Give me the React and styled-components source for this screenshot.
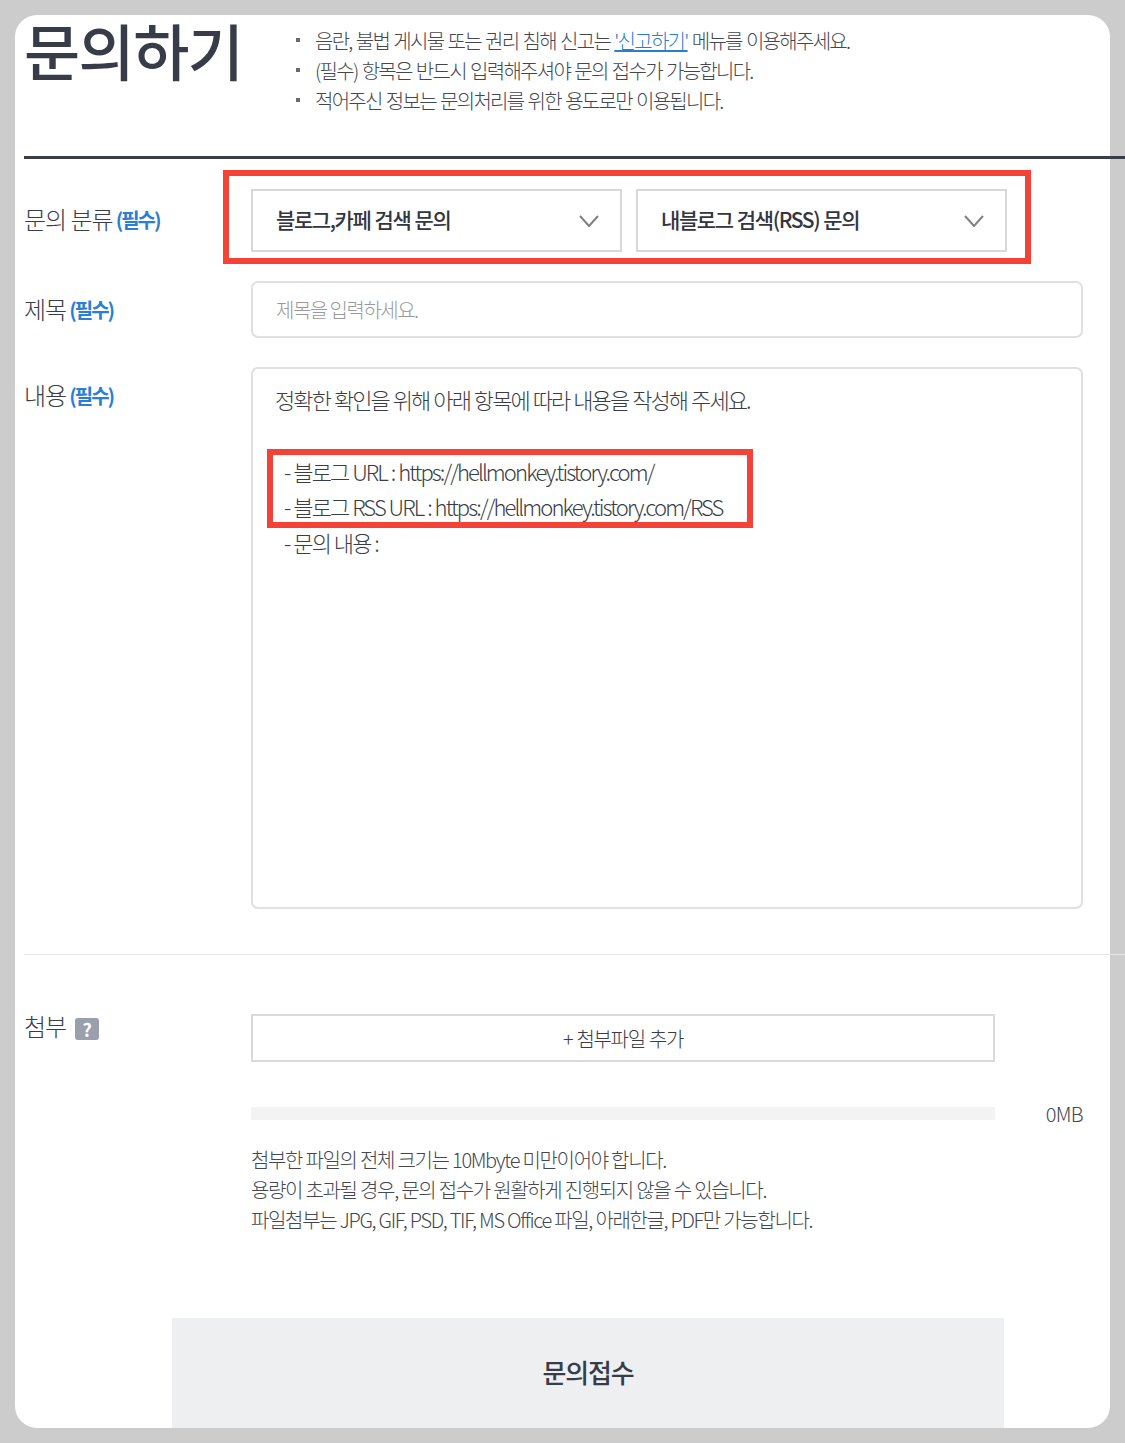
import React from "react";
import styled, { createGlobalStyle } from "styled-components";

const GlobalStyle = createGlobalStyle`
    * {
        box-sizing: border-box;
    }
    html, body {
        margin: 0;
        background-color: #cccccc;
    }
    body {
        height: 1443px;
        overflow: hidden;
        font-family: "Noto Sans CJK KR", "Noto Sans", sans-serif;
        color: #3a3d46;
    }
`

const Card = styled.div`
    width: 1095px;
    height: 1413px;
    margin: 15px 0 0 15px;
    padding-left: 9px;
    background-color: #ffffff;
    border-radius: 22px;
`

const Header = styled.header`
    height: 141px;
    display: flex;
    align-items: flex-start;
`

const Title = styled.h1`
    width: 272px;
    margin: 0;
    font-size: 61px;
    line-height: 70px;
    font-weight: 500;
    letter-spacing: -1.5px;
    color: #383c48;
`

const Notices = styled.ul`
    list-style: none;
    margin: 11px 0 0;
    padding: 0;
`

const Notice = styled.li`
    position: relative;
    padding-left: 19px;
    font-size: 20px;
    line-height: 30px;
    font-weight: 300;
    letter-spacing: -1.73px;
    word-spacing: 1.5px;
    color: #44474f;
    &::before {
        content: "";
        position: absolute;
        left: 0;
        top: 12px;
        width: 4px;
        height: 4px;
        background-color: #666a72;
    }
`

const NoticeLink = styled.a`
    color: #2a7fc9;
    text-decoration: underline;
`

const HeavyLine = styled.div`
    height: 3px;
    margin-right: -15px;
    background-color: #3a3d46;
`

const FormRow = styled.div`
    display: grid;
    grid-template-columns: 227px 1fr;
    margin-top: ${(props) => props.$top}px;
`

const Label = styled.label`
    margin-top: ${(props) => props.$top || 0}px;
    font-size: 24px;
    line-height: 32px;
    font-weight: 300;
    letter-spacing: -1px;
    color: #3a3d46;
    display: flex;
    align-items: center;
    align-self: flex-start;
    gap: 3px;
`

const Required = styled.span`
    margin-top: 2px;
    font-size: 20px;
    font-weight: 700;
    letter-spacing: -2px;
    color: #2a7fd4;
`

const RedFrame = styled.div`
    width: 808px;
    height: 94px;
    margin-left: -28px;
    padding: 13px 0 0 22px;
    display: flex;
    gap: 14px;
    border: 6px solid #f44336;
`

const Select = styled.div`
    width: 371px;
    height: 63px;
    padding: 0 21px 4px 23px;
    display: flex;
    align-items: center;
    justify-content: space-between;
    border: 2px solid #d8d8d8;
    font-size: 21px;
    font-weight: 500;
    letter-spacing: -1.4px;
    word-spacing: 0.8px;
    color: #33363f;
`

const Chevron = styled.svg`
    width: 20px;
    height: 12px;
    margin-top: 4px;
    fill: none;
    stroke: #7d8087;
    stroke-width: 2;
`

const TextInput = styled.div`
    width: 832px;
    height: 57px;
    padding: 0 23px;
    display: flex;
    align-items: center;
    border: 2px solid #e0e0e0;
    border-radius: 7px;
    font-size: 20px;
    font-weight: 300;
    letter-spacing: -1.5px;
    color: #9a9a9a;
`

const TextArea = styled.div`
    width: 832px;
    height: 542px;
    padding: 13px 0 0 14px;
    border: 2px solid #e0e0e0;
    border-radius: 7px;
    font-size: 22px;
    line-height: 35px;
    font-weight: 300;
    letter-spacing: -1.9px;
    word-spacing: 0.9px;
    color: #3a3d46;
`

const TextLine = styled.div`
    padding-left: ${(props) => props.$indent}px;
    margin-top: ${(props) => props.$top || 0}px;
`

const Highlight = styled.div`
    width: 486px;
    height: 79px;
    margin-top: 32px;
    padding-left: 11px;
    border: 6px solid #f44336;
    & > div:first-child {
        margin-top: -1px;
    }
`

const ThinLine = styled.div`
    height: 1px;
    margin: 45px -15px 0 0;
    background-color: #e6e6e6;
`

const HelpBadge = styled.span`
    width: 24px;
    height: 22px;
    margin: 6px 0 0 6px;
    display: flex;
    align-items: center;
    justify-content: center;
    border-radius: 3px;
    background-color: #9a9fae;
    color: #ffffff;
    font-size: 18px;
    font-weight: 700;
    letter-spacing: 0;
`

const AttachButton = styled.button`
    display: block;
    width: 744px;
    height: 48px;
    padding: 0;
    border: 2px solid #dadada;
    background-color: #ffffff;
    font-family: inherit;
    font-size: 20px;
    font-weight: 300;
    letter-spacing: -1.3px;
    word-spacing: 1px;
    color: #3a3d46;
`

const ProgressRow = styled.div`
    width: 832px;
    margin-top: 39px;
    display: flex;
    align-items: center;
    justify-content: space-between;
    height: 24px;
    font-size: 20px;
    font-weight: 300;
    letter-spacing: -0.7px;
    color: #44474f;
`

const ProgressBar = styled.div`
    width: 744px;
    height: 13px;
    background-color: #f3f3f3;
`

const HelpText = styled.p`
    margin: 20px 0 0;
    font-size: 20px;
    line-height: 30px;
    font-weight: 300;
    letter-spacing: -1.35px;
    word-spacing: 0.3px;
    color: #44474f;
`

const SubmitButton = styled.button`
    display: block;
    width: 832px;
    height: 110px;
    margin: 83px 0 0 148px;
    padding: 0 0 4px;
    border: 0;
    background-color: #eeeff1;
    font-family: inherit;
    font-size: 26px;
    font-weight: 500;
    letter-spacing: -1.2px;
    color: #383c48;
`

const ArrowDown = () => (
    <Chevron viewBox="0 0 20 12">
        <polyline points="1,1 10,11 19,1" />
    </Chevron>
)

export default function App() {
    return (
        <>
            <GlobalStyle />
            <Card>
                <Header>
                    <Title>문의하기</Title>
                    <Notices>
                        <Notice>음란, 불법 게시물 또는 권리 침해 신고는 <NoticeLink>'신고하기'</NoticeLink> 메뉴를 이용해주세요.</Notice>
                        <Notice>(필수) 항목은 반드시 입력해주셔야 문의 접수가 가능합니다.</Notice>
                        <Notice>적어주신 정보는 문의처리를 위한 용도로만 이용됩니다.</Notice>
                    </Notices>
                </Header>
                <HeavyLine />

                <FormRow $top={11}>
                    <Label $top={32}>문의 분류 <Required>(필수)</Required></Label>
                    <RedFrame>
                        <Select>블로그,카페 검색 문의<ArrowDown /></Select>
                        <Select>내블로그 검색(RSS) 문의<ArrowDown /></Select>
                    </RedFrame>
                </FormRow>

                <FormRow $top={17}>
                    <Label $top={11}>제목 <Required>(필수)</Required></Label>
                    <TextInput>제목을 입력하세요.</TextInput>
                </FormRow>

                <FormRow $top={29}>
                    <Label $top={11}>내용 <Required>(필수)</Required></Label>
                    <TextArea>
                        <TextLine $indent={8}>정확한 확인을 위해 아래 항목에 따라 내용을 작성해 주세요.</TextLine>
                        <Highlight>
                            <div>- 블로그 URL : https://hellmonkey.tistory.com/</div>
                            <div>- 블로그 RSS URL : https://hellmonkey.tistory.com/RSS</div>
                        </Highlight>
                        <TextLine $indent={17} $top={-3}>- 문의 내용 :</TextLine>
                    </TextArea>
                </FormRow>

                <ThinLine />

                <FormRow $top={59}>
                    <Label $top={-4}>첨부 <HelpBadge>?</HelpBadge></Label>
                    <div>
                        <AttachButton>+ 첨부파일 추가</AttachButton>
                        <ProgressRow>
                            <ProgressBar />
                            <span>0MB</span>
                        </ProgressRow>
                        <HelpText>
                            첨부한 파일의 전체 크기는 10Mbyte 미만이어야 합니다.<br />
                            용량이 초과될 경우, 문의 접수가 원활하게 진행되지 않을 수 있습니다.<br />
                            파일첨부는 JPG, GIF, PSD, TIF, MS Office 파일, 아래한글, PDF만 가능합니다.
                        </HelpText>
                    </div>
                </FormRow>

                <SubmitButton>문의접수</SubmitButton>
            </Card>
        </>
    );
}
